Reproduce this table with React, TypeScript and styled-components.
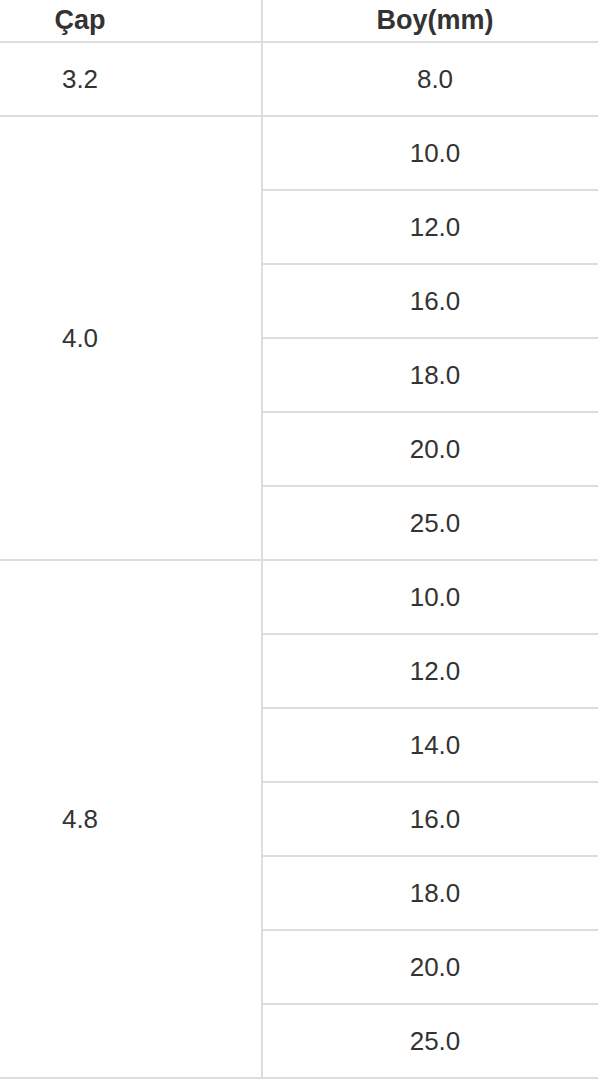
import React from 'react';
import styled, { createGlobalStyle } from 'styled-components';

const GlobalStyle = createGlobalStyle`
html, body {
  margin: 0;
  padding: 0;
  background: #fff;
}
body {
  font-family: "Liberation Sans", Arial, Helvetica, sans-serif;
  color: #333;
}
`;

const Table = styled.table`
width: 598px;
border-collapse: collapse;
table-layout: fixed;
`;

const HeadCell = styled.th<{ side: 'left' | 'right' }>`
height: 41px;
padding: 0;
padding-left: ${({ side }) => (side === 'right' ? '9px' : '0')};
padding-right: ${({ side }) => (side === 'left' ? '101px' : '0')};
font-size: 27px;
font-weight: bold;
text-align: center;
vertical-align: middle;
border-bottom: 2px solid #ddd;
border-right: ${({ side }) => (side === 'left' ? '2px solid #ddd' : 'none')};
line-height: 1;
`;

const Cell = styled.td<{ side: 'left' | 'right' }>`
height: 72px;
padding: 0;
padding-left: ${({ side }) => (side === 'right' ? '9px' : '0')};
padding-right: ${({ side }) => (side === 'left' ? '101px' : '0')};
font-size: 26px;
text-align: center;
vertical-align: middle;
border-bottom: 2px solid #ddd;
border-right: ${({ side }) => (side === 'left' ? '2px solid #ddd' : 'none')};
line-height: 1;
`;

const groups = [
    { cap: '3.2', boy: ['8.0'] },
    { cap: '4.0', boy: ['10.0', '12.0', '16.0', '18.0', '20.0', '25.0'] },
    { cap: '4.8', boy: ['10.0', '12.0', '14.0', '16.0', '18.0', '20.0', '25.0'] },
];

export default function App() {
    return (
        <>
            <GlobalStyle />
            <Table>
                <colgroup>
                    <col style={{ width: 262 }} />
                    <col />
                </colgroup>
                <thead>
                    <tr>
                        <HeadCell side="left">Çap</HeadCell>
                        <HeadCell side="right">Boy(mm)</HeadCell>
                    </tr>
                </thead>
                <tbody>
                    {groups.map((g) =>
                        g.boy.map((b, i) => (
                            <tr key={g.cap + b}>
                                {i === 0 && (
                                    <Cell side="left" rowSpan={g.boy.length}>
                                        {g.cap}
                                    </Cell>
                                )}
                                <Cell side="right">{b}</Cell>
                            </tr>
                        ))
                    )}
                </tbody>
            </Table>
        </>
    );
}
